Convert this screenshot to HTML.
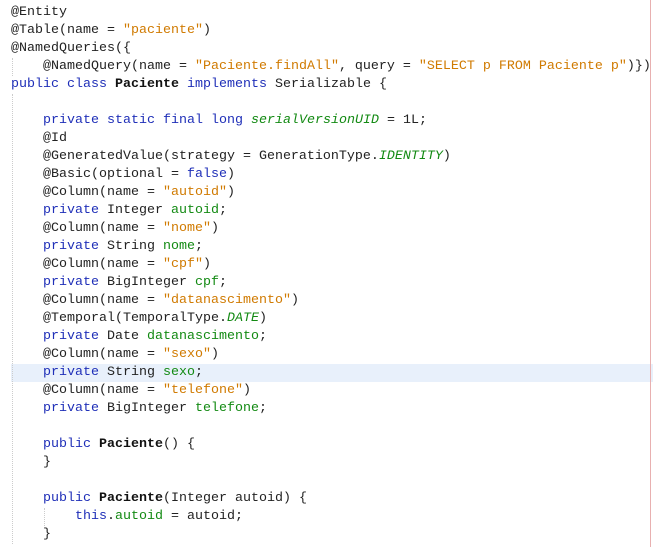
<!DOCTYPE html>
<html><head><meta charset="utf-8"><style>
html,body{margin:0;padding:0;background:#fff;width:653px;height:547px;overflow:hidden}
.wrap{position:relative;width:653px;height:547px}
.code{position:absolute;left:11px;top:4px;font-family:"Liberation Mono",monospace;font-size:13.33px;line-height:18px;color:#222;white-space:pre}
.k{color:#1f2fb8}
.s{color:#d07a00}
.f{color:#138a13}
.i{font-style:italic}
.b{font-weight:bold;color:#111}
.hl{position:absolute;left:11px;top:364px;width:642px;height:18px;background:#e8f0fb}
.rb{position:absolute;left:650px;top:0;width:1px;height:547px;background:#e8b0b0}
.g{position:absolute;left:12px;border-left:1px dotted #ccc}
</style></head><body><div class="wrap">
<div class="hl"></div>
<div class="rb"></div>
<div class="g" style="top:58px;height:18px"></div>
<div class="g" style="top:94px;height:450px"></div>
<div class="g" style="left:44px;top:508px;height:18px"></div>
<div class="code">@Entity
@Table(name = <span class="s">"paciente"</span>)
@NamedQueries({
    @NamedQuery(name = <span class="s">"Paciente.findAll"</span>, query = <span class="s">"SELECT p FROM Paciente p"</span>)})
<span class="k">public class</span> <span class="b">Paciente</span> <span class="k">implements</span> Serializable {

    <span class="k">private static final long</span> <span class="f i">serialVersionUID</span> = 1L;
    @Id
    @GeneratedValue(strategy = GenerationType.<span class="f i">IDENTITY</span>)
    @Basic(optional = <span class="k">false</span>)
    @Column(name = <span class="s">"autoid"</span>)
    <span class="k">private</span> Integer <span class="f">autoid</span>;
    @Column(name = <span class="s">"nome"</span>)
    <span class="k">private</span> String <span class="f">nome</span>;
    @Column(name = <span class="s">"cpf"</span>)
    <span class="k">private</span> BigInteger <span class="f">cpf</span>;
    @Column(name = <span class="s">"datanascimento"</span>)
    @Temporal(TemporalType.<span class="f i">DATE</span>)
    <span class="k">private</span> Date <span class="f">datanascimento</span>;
    @Column(name = <span class="s">"sexo"</span>)
    <span class="k">private</span> String <span class="f">sexo</span>;
    @Column(name = <span class="s">"telefone"</span>)
    <span class="k">private</span> BigInteger <span class="f">telefone</span>;

    <span class="k">public</span> <span class="b">Paciente</span>() {
    }

    <span class="k">public</span> <span class="b">Paciente</span>(Integer autoid) {
        <span class="k">this</span>.<span class="f">autoid</span> = autoid;
    }</div>
</div></body></html>
